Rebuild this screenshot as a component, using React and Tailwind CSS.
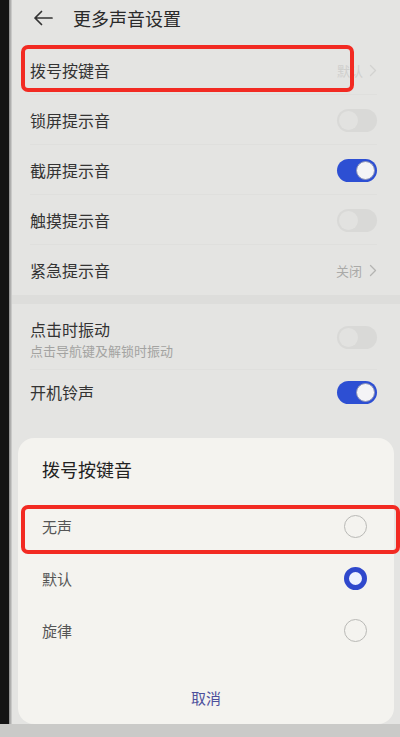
import React from "react";

const font = { fontFamily: '"Noto Sans CJK SC", "Noto Sans", sans-serif' };

function Toggle({ on }) {
  if (on) {
    return (
      <div className="w-[40px] h-[23px] rounded-full bg-[#2d4fd3] flex items-center justify-end pr-[2px]">
        <div className="w-[19px] h-[19px] rounded-full bg-[#f4f4f6] border border-[#8c93b8]" />
      </div>
    );
  }
  return (
    <div className="w-[40px] h-[23px] rounded-full bg-[#d9d9d7] flex items-center pl-[2px]">
      <div className="w-[19px] h-[19px] rounded-full bg-[#e2e2e0]" />
    </div>
  );
}

function Chevron({ color }) {
  return (
    <svg width="8" height="13" viewBox="0 0 8 13" fill="none">
      <path d="M1.5 1.5 L6.5 6.5 L1.5 11.5" stroke={color} strokeWidth="1.3" strokeLinecap="round" strokeLinejoin="round" />
    </svg>
  );
}

function Row({ label, right, h = "h-[50px]", line = true }) {
  return (
    <div className={`${h} flex items-center justify-between pl-[18px] pr-[23px] relative`}>
      <span className="text-[16px] text-[#333333] leading-none">{label}</span>
      {right}
      {line && <div className="absolute left-[18px] right-[23px] bottom-0 h-px bg-[#dfdfdd]" />}
    </div>
  );
}

function Radio({ checked }) {
  if (checked) {
    return (
      <div className="w-[23px] h-[23px] rounded-full border-[5px] border-[#2f48cc] bg-[#eef2ff]" />
    );
  }
  return <div className="w-[23px] h-[23px] rounded-full border-[1.5px] border-[#b9b9b6]" />;
}

function Option({ label, checked }) {
  return (
    <div className="h-[52px] flex items-center justify-between pl-[24px] pr-[27px]">
      <span className="text-[15px] text-[#555555] leading-none">{label}</span>
      <Radio checked={checked} />
    </div>
  );
}

export default function App() {
  return (
    <div className="w-[400px] h-[737px] relative overflow-hidden flex bg-[#e4e4e2]" style={font}>
      {/* phone bezel edge */}
      <div className="w-[9px] h-full bg-[#141414]" />
      <div className="w-[3px] h-full bg-gradient-to-r from-[#8a8a8a] to-[#d6d6d4]" />

      {/* settings page */}
      <div className="flex-1 flex flex-col">
        <div className="h-[36px] flex items-center pl-[21px]">
          <svg width="20" height="16" viewBox="0 0 20 16" fill="none">
            <path d="M19 8 H2 M8.5 1.5 L2 8 L8.5 14.5" stroke="#333" strokeWidth="1.7" strokeLinecap="round" strokeLinejoin="round" />
          </svg>
          <span className="ml-[20px] text-[18px] text-[#2a2a2a] leading-none">更多声音设置</span>
        </div>
        <div className="h-[9px]" />
        <Row
          label="拨号按键音"
          right={
            <div className="flex items-center gap-[6px]">
              <span className="text-[13px] text-[#cfcfcd] leading-none">默认</span>
              <Chevron color="#d2d2d0" />
            </div>
          }
        />
        <Row label="锁屏提示音" right={<Toggle on={false} />} />
        <Row label="截屏提示音" right={<Toggle on />} />
        <Row label="触摸提示音" right={<Toggle on={false} />} />
        <Row
          label="紧急提示音"
          line={false}
          right={
            <div className="flex items-center gap-[7px]">
              <span className="text-[13px] text-[#aaaaa8] leading-none">关闭</span>
              <Chevron color="#b4b4b2" />
            </div>
          }
        />
        <div className="h-[9px] bg-[#dddddb]" />
        <div className="h-[66px] flex items-center justify-between pl-[18px] pr-[23px] relative">
          <div className="flex flex-col gap-[7px] pt-[4px]">
            <span className="text-[16px] text-[#333333] leading-none">点击时振动</span>
            <span className="text-[13px] text-[#a3a3a1] leading-none">点击导航键及解锁时振动</span>
          </div>
          <Toggle on={false} />
          <div className="absolute left-[18px] right-[23px] bottom-0 h-px bg-[#dfdfdd]" />
        </div>
        <Row label="开机铃声" h="h-[44px]" line={false} right={<Toggle on />} />
      </div>

      {/* bottom sheet dialog */}
      <div className="absolute left-[18px] w-[376px] top-[438px] h-[286px] rounded-[16px] bg-[#f4f3ef] flex flex-col">
        <div className="h-[62px] flex items-center pl-[24px]">
          <span className="text-[18px] text-[#222222] leading-none">拨号按键音</span>
        </div>
        <Option label="无声" />
        <Option label="默认" checked />
        <Option label="旋律" />
        <div className="flex-1 flex justify-center pt-[31px]">
          <span className="text-[15px] text-[#4d4f9c] leading-[22px]">取消</span>
        </div>
      </div>
      <div className="absolute left-0 right-0 bottom-0 h-[13px] bg-[#cacac8]" />

      {/* red highlight frames */}
      <div className="absolute left-[21px] top-[45px] w-[333px] h-[47px] border-[4px] border-[#f22a22] rounded-[7px]" />
      <div className="absolute left-[21px] top-[505px] w-[379px] h-[49px] border-[4px] border-[#f22a22] rounded-[7px]" />
    </div>
  );
}
